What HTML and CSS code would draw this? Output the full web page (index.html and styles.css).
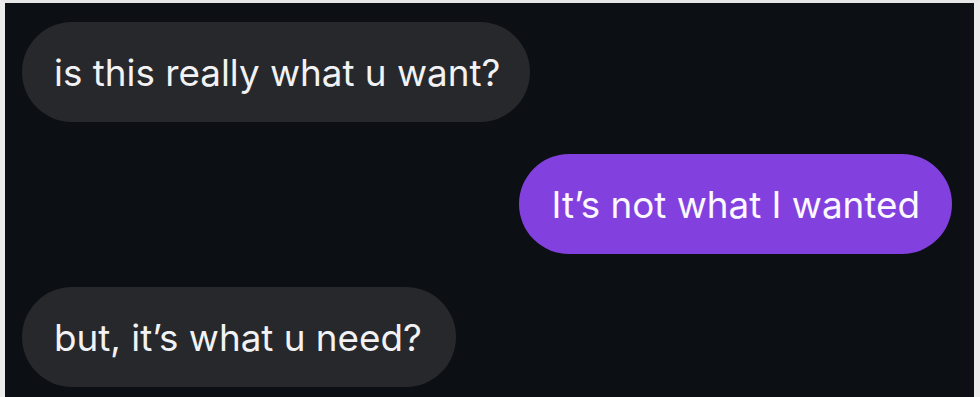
FILE: index.html
```html
<!DOCTYPE html>
<html lang="en">
<head>
<meta charset="utf-8">
<title>Chat</title>
<link rel="stylesheet" href="styles.css">
</head>
<body>
<div class="frame">
  <div class="chat">
    <div class="bubble incoming">is this really what u want?</div>
    <div class="bubble outgoing">It’s not what I wanted</div>
    <div class="bubble incoming last">but, it’s what u need?</div>
  </div>
</div>
</body>
</html>
```

FILE: styles.css
```css
html, body {
  margin: 0;
  padding: 0;
  background: #e9e9e9;
}
.frame {
  width: 980px;
  height: 397px;
  box-sizing: border-box;
  border-top: 3px solid #e6e6e6;
  border-left: 5px solid #ececec;
  border-right: 6px solid #ececec;
  background: #0c0f13;
  overflow: hidden;
}
.chat {
  display: flex;
  flex-direction: column;
  gap: 32px;
  padding: 19px 22px 0 17px;
}
.bubble {
  height: 100px;
  box-sizing: border-box;
  display: flex;
  align-items: center;
  padding: 0 30px 0 32px;
  border-radius: 50px;
  font-family: "Inter", "Roboto", sans-serif;
  font-size: 36.8px;
  color: #f2f2f4;
  white-space: nowrap;
}
.incoming {
  align-self: flex-start;
  background: #26282c;
}
.last {
  margin-top: 1px;
  padding-right: 34px;
}
.outgoing {
  align-self: flex-end;
  background: #8241df;
  color: #fbf8ff;
  padding: 0 32px 0 32px;
}
```
